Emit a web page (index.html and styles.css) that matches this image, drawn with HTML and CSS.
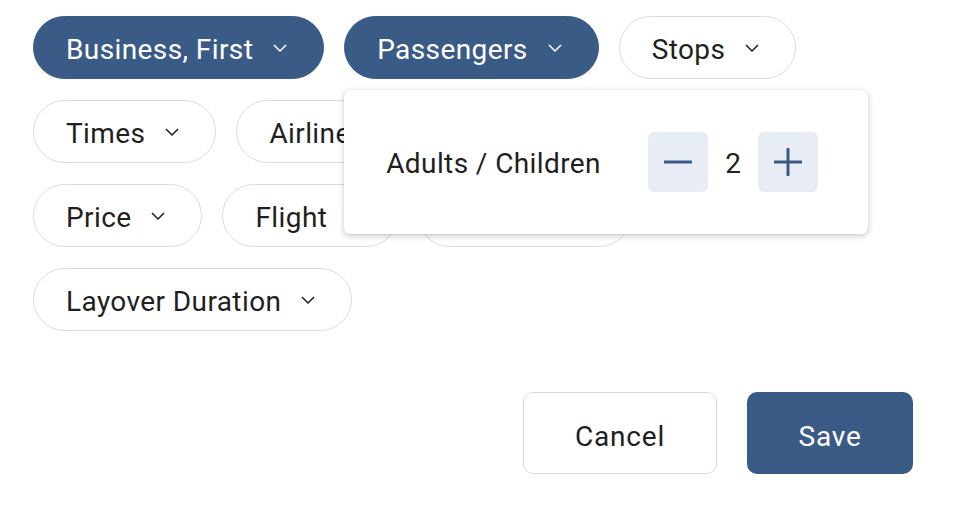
FILE: index.html
```html
<!DOCTYPE html>
<html lang="en">
<head>
<meta charset="utf-8">
<title>Flight filters</title>
<link rel="stylesheet" href="styles.css">
</head>
<body>
<div class="page">
  <div class="chips">
    <button class="chip chip-active">Business, First<svg class="chev" viewBox="0 0 14 8"><path d="M1 1l6 6 6-6"/></svg></button>
    <div class="anchor">
      <button class="chip chip-active">Passengers<svg class="chev" viewBox="0 0 14 8"><path d="M1 1l6 6 6-6"/></svg></button>
      <div class="popup">
        <span class="popup-label">Adults / Children</span>
        <div class="stepper">
          <button class="step"><svg viewBox="0 0 28 28"><path d="M1 14h26"/></svg></button>
          <span class="step-value">2</span>
          <button class="step"><svg viewBox="0 0 28 28"><path d="M1 14h26M14 1v26"/></svg></button>
        </div>
      </div>
    </div>
    <button class="chip">Stops<svg class="chev" viewBox="0 0 14 8"><path d="M1 1l6 6 6-6"/></svg></button>
    <button class="chip">Times<svg class="chev" viewBox="0 0 14 8"><path d="M1 1l6 6 6-6"/></svg></button>
    <button class="chip">Airlines<svg class="chev" viewBox="0 0 14 8"><path d="M1 1l6 6 6-6"/></svg></button>
    <button class="chip">Connecting airports<svg class="chev" viewBox="0 0 14 8"><path d="M1 1l6 6 6-6"/></svg></button>
    <button class="chip">Price<svg class="chev" viewBox="0 0 14 8"><path d="M1 1l6 6 6-6"/></svg></button>
    <button class="chip">Flight<svg class="chev" viewBox="0 0 14 8"><path d="M1 1l6 6 6-6"/></svg></button>
    <button class="chip">Duration<svg class="chev" viewBox="0 0 14 8"><path d="M1 1l6 6 6-6"/></svg></button>
    <button class="chip">Layover Duration<svg class="chev" viewBox="0 0 14 8"><path d="M1 1l6 6 6-6"/></svg></button>
  </div>
  <div class="actions">
    <button class="btn btn-cancel">Cancel</button>
    <button class="btn btn-save">Save</button>
  </div>
</div>
</body>
</html>
```
FILE: styles.css
```css
* { box-sizing: border-box; }
html, body { margin: 0; background: #fff; }
body {
  font-family: Roboto, "Liberation Sans", sans-serif;
  color: #1f1f1f;
}
.page {
  width: 962px;
  padding: 16px 49px 0 33px;
}
.chips {
  display: flex;
  flex-wrap: wrap;
  gap: 21px 20px;
}
.anchor { position: relative; }
.chip {
  display: flex;
  align-items: center;
  height: 63px;
  padding: 3px 36px 0 32px;
  border: 1.5px solid #dcdcdc;
  border-radius: 32px;
  background: #fff;
  color: #1f1f1f;
  font-family: inherit;
  font-size: 28px;
  letter-spacing: 0.4px;
  white-space: nowrap;
}
.chip-active {
  background: #3b5b87;
  border-color: #3b5b87;
  color: #fff;
}
.chev {
  width: 14px;
  height: 8px;
  margin-left: 20px;
  margin-top: -3px;
  fill: none;
  stroke: currentColor;
  stroke-width: 1.5;
}
.popup {
  position: absolute;
  top: 74px;
  left: 0;
  z-index: 2;
  width: 524px;
  height: 144px;
  padding: 0 50px 0 42px;
  display: flex;
  align-items: center;
  justify-content: space-between;
  background: #fff;
  border-radius: 6px;
  box-shadow: 0 2px 6px rgba(0, 0, 0, 0.22), 0 0 1px rgba(0, 0, 0, 0.15);
}
.popup-label {
  font-size: 28px;
  letter-spacing: 0.4px;
  padding-top: 3px;
}
.stepper {
  display: flex;
  align-items: center;
}
.step {
  width: 60px;
  height: 60px;
  border: 0;
  border-radius: 6px;
  background: #e8edf5;
  padding: 0;
  display: flex;
  align-items: center;
  justify-content: center;
}
.step svg {
  width: 28px;
  height: 28px;
  fill: none;
  stroke: #3b5b87;
  stroke-width: 3;
  stroke-linecap: round;
}
.step-value {
  font-size: 28px;
  width: 50px;
  text-align: center;
  padding-top: 3px;
}
.actions {
  display: flex;
  justify-content: flex-end;
  gap: 30px;
  margin-top: 61px;
}
.btn {
  height: 82px;
  padding-top: 7px;
  border-radius: 10px;
  font-family: inherit;
  font-size: 28px;
  letter-spacing: 0.8px;
}
.btn-cancel {
  width: 194px;
  background: #fff;
  border: 1.5px solid #dcdcdc;
  color: #1f1f1f;
}
.btn-save {
  width: 166px;
  background: #3b5b87;
  border: 0;
  color: #fff;
}
```
